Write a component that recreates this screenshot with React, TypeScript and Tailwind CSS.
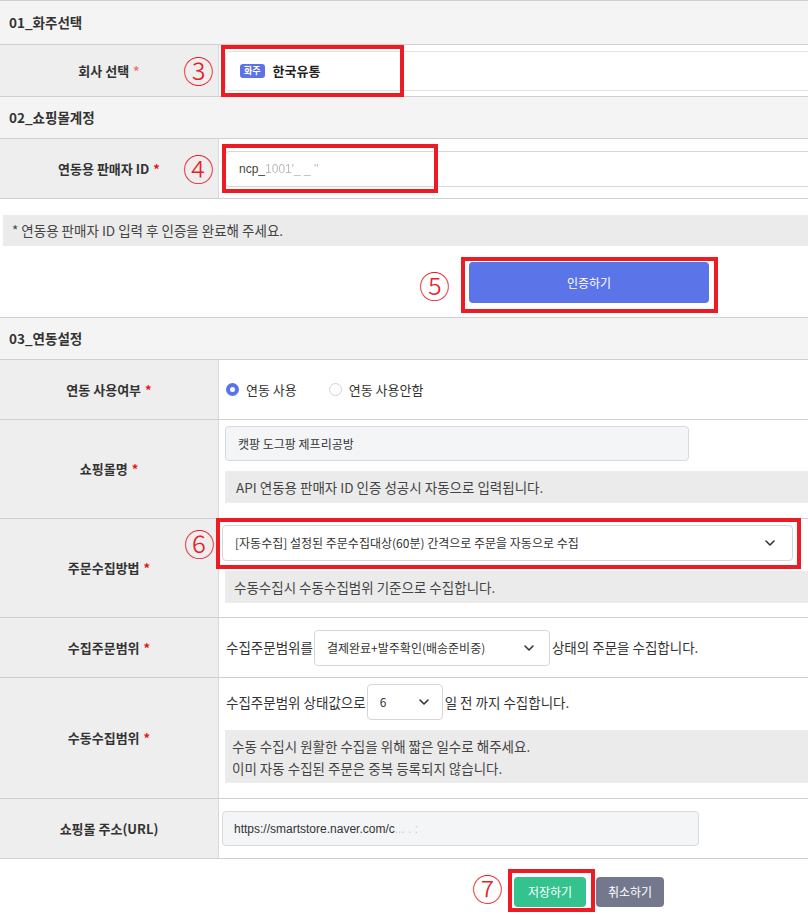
import { ChevronDown } from "lucide-react";
import type { ReactNode } from "react";

// 폰트 스택
const KR = { fontFamily: '"Noto Sans CJK KR", "Noto Sans", sans-serif' };
const LATIN = { fontFamily: '"Liberation Sans", "Noto Sans CJK KR", sans-serif' };

// 섹션 헤더
function SectionHeader({ title, tall }: { title: string; tall?: boolean }) {
  return (
    <div
      className={`flex items-center border-b border-[#d0d0d0] bg-[#f4f4f4] pl-[9px] text-[13.5px] font-bold text-[#333] ${
        tall ? "h-[44px]" : "h-[42px]"
      }`}
    >
      {title}
    </div>
  );
}

// 라벨 + 내용 행
function Row({
  label,
  required = true,
  soft,
  height,
  children,
}: {
  label: string;
  required?: boolean;
  soft?: boolean;
  height: string;
  children: ReactNode;
}) {
  return (
    <div className={`flex border-b border-[#d0d0d0] ${height}`}>
      <div className="flex w-[218px] shrink-0 items-center justify-center bg-[#eeeeee] text-[13px] font-bold text-[#333]">
        {label}
        {required && (
          <span className={`ml-[4px] ${soft ? "text-[#f07878]" : "text-[#ee1111]"}`}>*</span>
        )}
      </div>
      <div className="min-w-0 flex-1 border-l border-[#d9d9d9]">{children}</div>
    </div>
  );
}

// 안내 박스
function Notice({ children, className = "" }: { children: ReactNode; className?: string }) {
  return (
    <div className={`flex items-center bg-[#ebebeb] text-[13.5px] text-[#444] ${className}`}>
      {children}
    </div>
  );
}

// 셀렉트 박스 모양
function SelectBox({ text, className = "" }: { text: string; className?: string }) {
  return (
    <div
      className={`flex shrink-0 items-center justify-between rounded-[4px] border border-[#d6d6d6] bg-white text-[12px] text-[#333] ${className}`}
    >
      <span>{text}</span>
      <ChevronDown size={16} strokeWidth={2.4} className="text-[#333]" />
    </div>
  );
}

// 빨간 주석 박스 + 원문자 번호
function Mark({ box, num, numPos }: { box: string; num: string; numPos: string }) {
  return (
    <>
      <div className={`pointer-events-none absolute border-[4px] border-[#ed1c24] ${box}`} />
      <div
        className={`pointer-events-none absolute text-[31px] leading-none font-light text-[#e8202a] ${numPos}`}
        style={KR}
      >
        {num}
      </div>
    </>
  );
}

export default function App() {
  return (
    <div className="relative w-[808px] overflow-hidden bg-white text-[#333]" style={KR}>
      <div className="border-t border-[#d0d0d0]">
        {/* 01 화주선택 */}
        <SectionHeader title="01_화주선택" tall />
        <Row label="회사 선택" soft height="h-[52px]">
          <div className="flex h-full items-center pl-[6px]">
            <div className="flex h-[40px] w-[700px] shrink-0 items-center rounded-[4px] border border-[#e2e2e2] bg-white pl-[14px]">
              <span className="rounded-[3px] bg-[#5b73e8] px-[4px] py-[1px] text-[9px] leading-[12px] font-bold text-white">
                화주
              </span>
              <span className="ml-[8px] text-[13px] font-bold text-[#222]">한국유통</span>
            </div>
          </div>
        </Row>

        {/* 02 쇼핑몰계정 */}
        <SectionHeader title="02_쇼핑몰계정" />
        <Row label="연동용 판매자 ID" height="h-[60px]">
          <div className="flex h-full items-center pl-[6px]">
            <div
              className="flex h-[36px] w-[700px] shrink-0 items-center rounded-[4px] border border-[#d6d6d6] bg-white pl-[13px] text-[12px] text-[#444]"
              style={LATIN}
            >
              ncp_<span className="text-[#bbb] blur-[0.6px]">1001'_ _ ''</span>
            </div>
          </div>
        </Row>

        {/* 인증 안내 + 버튼 */}
        <div className="border-b border-[#d0d0d0] pt-[16px] pb-[14px]">
          <Notice className="ml-[3px] h-[31px] pl-[9px]">* 연동용 판매자 ID 입력 후 인증을 완료해 주세요.</Notice>
          <button className="mt-[16px] ml-[469px] flex h-[41px] w-[240px] items-center justify-center rounded-[4px] bg-[#5b75e8] text-[12px] text-white">
            인증하기
          </button>
        </div>

        {/* 03 연동설정 */}
        <SectionHeader title="03_연동설정" />
        <Row label="연동 사용여부" height="h-[60px]">
          <div className="flex h-full items-center pl-[7px] text-[13px] text-[#333]">
            <span className="h-[13px] w-[13px] rounded-full border-[4px] border-[#5b73e8] bg-white" />
            <span className="ml-[7px]">연동 사용</span>
            <span className="ml-[32px] h-[13px] w-[13px] rounded-full border border-[#cfd4da] bg-white" />
            <span className="ml-[7px]">연동 사용안함</span>
          </div>
        </Row>

        <Row label="쇼핑몰명" height="h-[99px]">
          <div className="flex flex-col pt-[6px] pl-[6px]">
            <div className="flex h-[35px] w-[464px] items-center rounded-[4px] border border-[#d6d9de] bg-[#f4f5f7] pl-[12px] text-[12px] text-[#333]">
              캣팡 도그팡 제프리공방
            </div>
            <Notice className="mt-[10px] h-[32px] pl-[11px]">API 연동용 판매자 ID 인증 성공시 자동으로 입력됩니다.</Notice>
          </div>
        </Row>

        <Row label="주문수집방법" height="h-[99px]">
          <div className="flex flex-col pt-[6px] pl-[3px]">
            <SelectBox
              text="[자동수집] 설정된 주문수집대상(60분) 간격으로 주문을 자동으로 수집"
              className="h-[36px] w-[571px] pr-[14px] pl-[12px]"
            />
            <Notice className="mt-[10px] ml-[3px] h-[32px] pl-[9px]">수동수집시 수동수집범위 기준으로 수집합니다.</Notice>
          </div>
        </Row>

        <Row label="수집주문범위" height="h-[60px]">
          <div className="flex h-full items-center pl-[7px] text-[13.5px] text-[#333]">
            <span>수집주문범위를</span>
            <SelectBox text="결제완료+발주확인(배송준비중)" className="ml-[1px] h-[36px] w-[236px] pr-[12px] pl-[12px]" />
            <span className="ml-[2px]">상태의 주문을 수집합니다.</span>
          </div>
        </Row>

        <Row label="수동수집범위" height="h-[121px]">
          <div className="flex flex-col pt-[6px] pl-[6px]">
            <div className="flex items-center pl-[1px] text-[13.5px] text-[#333]">
              <span>수집주문범위 상태값으로</span>
              <SelectBox text="6" className="ml-[1px] h-[36px] w-[76px] pr-[10px] pl-[12px]" />
              <span className="ml-[2px]">일 전 까지 수집합니다.</span>
            </div>
            <Notice className="mt-[10px] h-[53px] flex-col items-start justify-center pl-[7px] leading-[22px]">
              <span>수동 수집시 원활한 수집을 위해 짧은 일수로 해주세요.</span>
              <span>이미 자동 수집된 주문은 중복 등록되지 않습니다.</span>
            </Notice>
          </div>
        </Row>

        <Row label="쇼핑몰 주소(URL)" required={false} height="h-[60px]">
          <div className="flex h-full items-center pl-[3px]">
            <div
              className="flex h-[35px] w-[477px] items-center rounded-[4px] border border-[#d6d9de] bg-[#f4f5f7] pl-[11px] text-[12px] text-[#333]"
              style={LATIN}
            >
              https://smartstore.naver.com/c<span className="text-[#ccc] blur-[0.6px]">... . :</span>
            </div>
          </div>
        </Row>

        {/* 하단 버튼 */}
        <div className="flex gap-[10px] pt-[18px] pb-[10px] pl-[514px]">
          <button className="h-[30px] w-[72px] rounded-[4px] bg-[#34c38f] text-[12px] text-white">저장하기</button>
          <button className="h-[30px] w-[68px] rounded-[4px] bg-[#74788d] text-[12px] text-white">취소하기</button>
        </div>
      </div>

      {/* 주석 표시 */}
      <Mark box="left-[221px] top-[45px] h-[52px] w-[183px]" num="③" numPos="left-[183px] top-[54px]" />
      <Mark box="left-[222px] top-[144px] h-[49px] w-[216px]" num="④" numPos="left-[183px] top-[152px]" />
      <Mark box="left-[461px] top-[257px] h-[56px] w-[257px]" num="⑤" numPos="left-[419px] top-[269px]" />
      <Mark box="left-[216px] top-[518px] h-[51px] w-[585px]" num="⑥" numPos="left-[184px] top-[527px]" />
      <Mark box="left-[508px] top-[869px] h-[43px] w-[87px]" num="⑦" numPos="left-[472px] top-[872px]" />
    </div>
  );
}
